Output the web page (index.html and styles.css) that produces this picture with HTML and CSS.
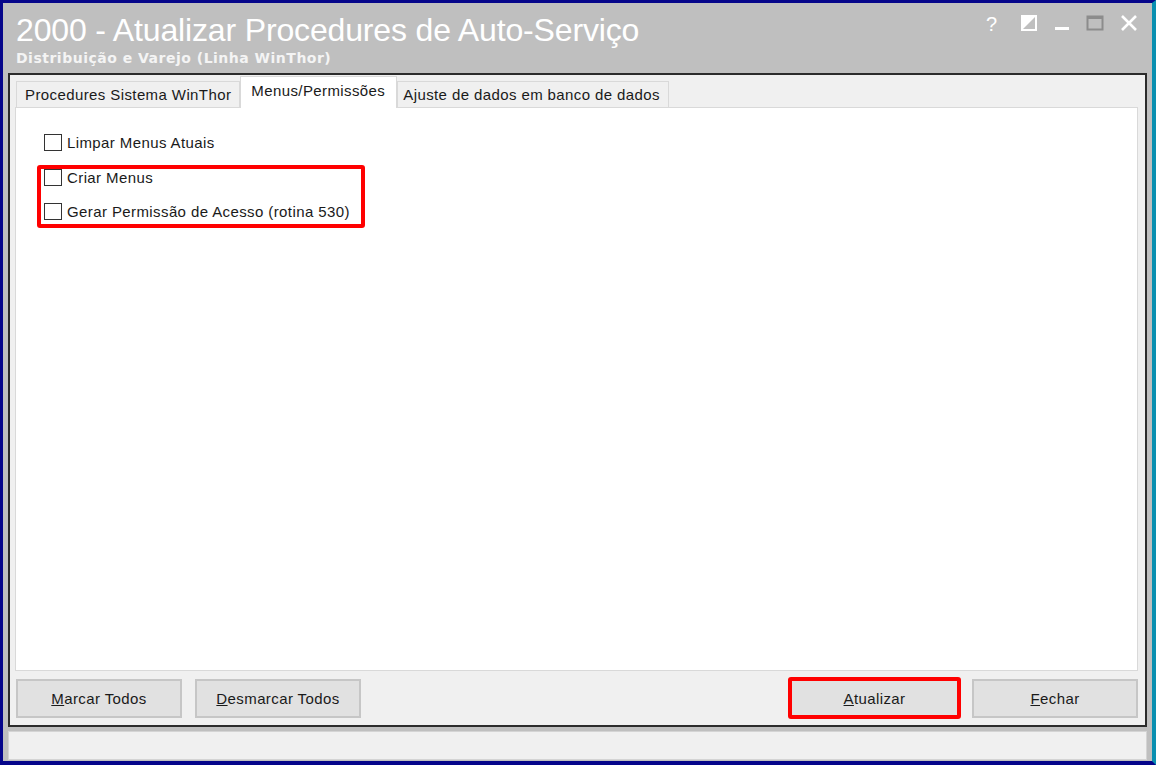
FILE: index.html
```html
<!DOCTYPE html>
<html>
<head>
  <title>2000 - Atualizar Procedures de Auto-Serviço</title>
  <meta charset="utf-8">
  <link rel="stylesheet" href="styles.css">
</head>
<body>
  <div class="window">
    <div class="titlebar">
      <div class="titles">
        <div class="title">2000 - Atualizar Procedures de Auto-Serviço</div>
        <div class="subtitle">Distribuição e Varejo (Linha WinThor)</div>
      </div>
      <div class="win-controls">
        <span class="ctl help">?</span>
        <svg class="ctl" width="18" height="18" viewBox="0 0 18 18">
          <rect x="1" y="1" width="16" height="16" fill="#ffffff"/>
          <polygon points="15,3 15,15 3,15" fill="#bfbfbf"/>
        </svg>
        <svg class="ctl" width="16" height="18" viewBox="0 0 16 18">
          <rect x="1" y="13" width="14" height="3" fill="#ffffff"/>
        </svg>
        <svg class="ctl" width="18" height="18" viewBox="0 0 18 18">
          <rect x="1.5" y="2.5" width="15" height="13" fill="none" stroke="#8c8c8c" stroke-width="2"/>
          <rect x="1" y="2" width="16" height="3" fill="#8c8c8c"/>
        </svg>
        <svg class="ctl" width="18" height="18" viewBox="0 0 18 18">
          <path d="M2 2 L16 16 M16 2 L2 16" stroke="#ffffff" stroke-width="2.6"/>
        </svg>
      </div>
    </div>

    <div class="panel">
      <div class="tabs">
        <div class="tab first">Procedures Sistema WinThor</div>
        <div class="tab active">Menus/Permissões</div>
        <div class="tab last">Ajuste de dados em banco de dados</div>
      </div>

      <div class="tab-page">
        <label class="check"><span class="box"></span>Limpar Menus Atuais</label>
        <div class="marked">
          <label class="check"><span class="box"></span>Criar Menus</label>
          <label class="check"><span class="box"></span>Gerar Permissão de Acesso (rotina 530)</label>
        </div>
      </div>

      <div class="buttons">
        <button class="btn"><u>M</u>arcar Todos</button>
        <button class="btn"><u>D</u>esmarcar Todos</button>
        <span class="spacer"></span>
        <span class="marked-btn"><button class="btn"><u>A</u>tualizar</button></span>
        <button class="btn"><u>F</u>echar</button>
      </div>
    </div>

    <div class="statusbar"></div>
  </div>
</body>
</html>
```

FILE: styles.css
```css
:root {
  --frame-blue: #05058a;
  --title-bg: #bfbfbf;
  --face: #f0f0f0;
  --btn-face: #e1e1e1;
  --tab-border: #d9d9d9;
  --mark-red: #ff0000;
  --text-color: #1a1a1a;
}

html, body {
  margin: 0;
  padding: 0;
}

body {
  width: 1156px;
  height: 765px;
  overflow: hidden;
  font-family: "Liberation Sans", Arial, sans-serif;
  color: var(--text-color);
}

.window {
  box-sizing: border-box;
  width: 1156px;
  height: 765px;
  border: 3px solid var(--frame-blue);
  border-bottom-width: 4px;
  border-right: 4px solid #0a8fb0;
  background: var(--title-bg);
  display: flex;
  flex-direction: column;
  padding: 0 5px;
}

/* Title bar */
.titlebar {
  height: 70px;
  display: flex;
  justify-content: space-between;
  flex-shrink: 0;
}

.titles {
  padding: 9px 0 0 8px;
  color: #ffffff;
}

.title {
  font-size: 32px;
  line-height: 36px;
  letter-spacing: -0.15px;
}

.subtitle {
  font-family: "DejaVu Sans", Verdana, sans-serif;
  font-size: 14px;
  font-weight: bold;
  letter-spacing: 0.5px;
  line-height: 17px;
  margin-top: 2px;
  color: #f4f4f4;
}

.win-controls {
  display: flex;
  align-items: flex-start;
  gap: 16px;
  padding: 11px 9px 0 0;
}

.ctl {
  display: block;
}

.help {
  color: #ffffff;
  font-size: 20px;
  line-height: 20px;
  width: 12px;
  margin-right: 6px;
}

/* Main panel */
.panel {
  flex: 1;
  background: var(--face);
  border: 2px solid #2b2b2b;
  display: flex;
  flex-direction: column;
  padding: 2px 7px 6px 5px;
}

.tabs {
  display: flex;
  align-items: flex-end;
  height: 30px;
  padding-left: 1px;
  font-size: 15px;
  letter-spacing: 0.4px;
}

.tab {
  height: 25px;
  line-height: 25px;
  padding: 0 8px;
  background: var(--face);
  border: 1px solid var(--tab-border);
  border-bottom: none;
}

.tab.last {
  padding: 0 8px 0 5px;
}

.tab.active {
  background: #ffffff;
  height: 31px;
  line-height: 28px;
  padding: 0 11px 0 10px;
  margin-bottom: -1px;
  position: relative;
  z-index: 1;
}

.tab-page {
  flex: 1;
  background: #ffffff;
  border: 1px solid var(--tab-border);
  padding: 21px 0 0 28px;
}

.check {
  display: flex;
  align-items: center;
  font-size: 15px;
  letter-spacing: 0.4px;
  height: 26px;
  color: #1a1a1a;
}

.box {
  box-sizing: border-box;
  width: 18px;
  height: 17px;
  border: 1px solid #333333;
  background: #ffffff;
  margin-right: 5px;
  flex-shrink: 0;
}

.marked {
  display: inline-block;
  border: 4px solid var(--mark-red);
  border-radius: 3px;
  margin: 10px 0 0 -7px;
  padding: 0 11px 4px 3px;
}

.marked .check {
  height: 17px;
}

.marked .check + .check {
  margin-top: 17px;
}

/* Button row */
.buttons {
  display: flex;
  align-items: flex-start;
  gap: 13px;
  margin-top: 8px;
  padding-left: 1px;
}

.spacer {
  flex: 1;
}

.btn {
  box-sizing: border-box;
  width: 166px;
  height: 39px;
  font-family: "Liberation Sans", Arial, sans-serif;
  font-size: 15px;
  letter-spacing: 0.4px;
  color: #1a1a1a;
  background: var(--btn-face);
  border: 2px solid #c6c6c6;
  padding: 0;
}

.marked-btn {
  display: block;
  margin-top: -2px;
  border: 4px solid var(--mark-red);
  border-radius: 3px;
  padding: 0 3px;
  margin-right: -2px;
  background: var(--btn-face);
}

.marked-btn .btn {
  width: 159px;
  height: 34px;
  border: none;
}

/* Status bar */
.statusbar {
  height: 29px;
  box-sizing: border-box;
  margin: 4px 0 1px 0;
  background: var(--face);
  border: 1px solid #d4d4d4;
  flex-shrink: 0;
}
```
